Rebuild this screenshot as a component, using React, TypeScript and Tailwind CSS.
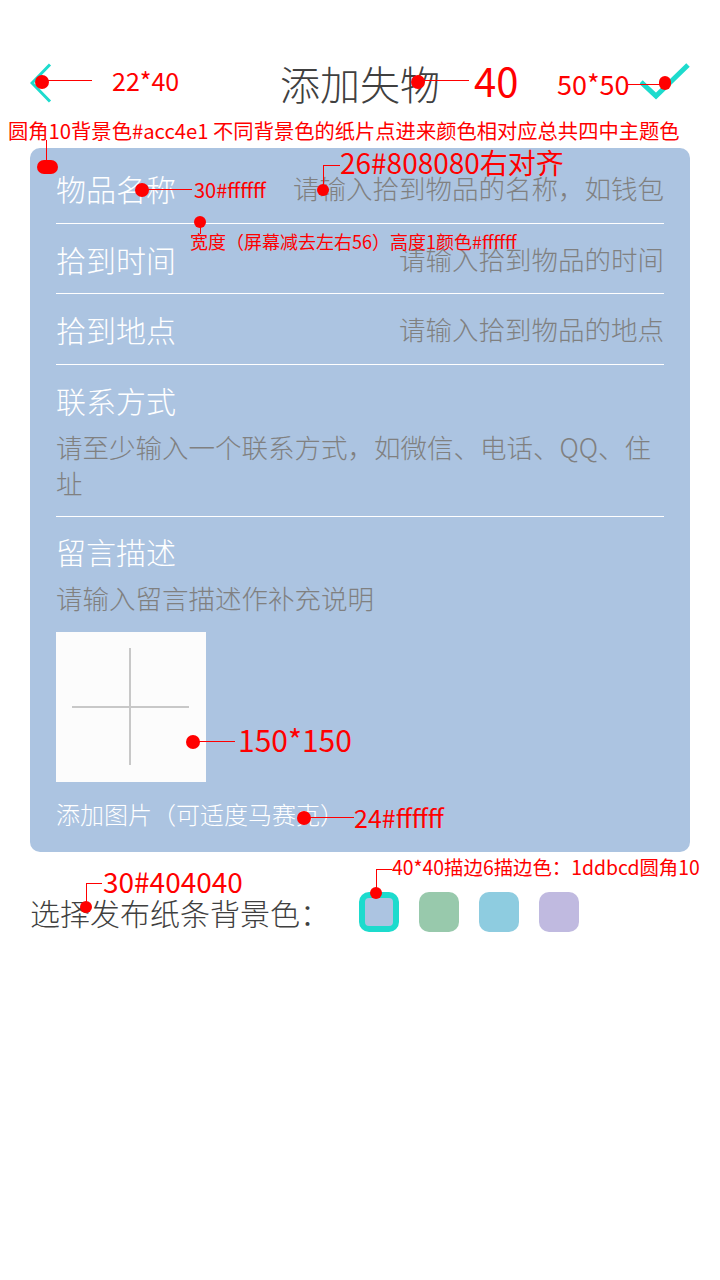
import React from "react";

const F = "font-['Noto_Sans_CJK_SC','Noto_Sans',sans-serif]";

function Swatch({ cls }: { cls: string }) {
  return <div className={`w-[40px] h-[40px] rounded-[10px] ${cls}`} />;
}

export default function App() {
  return (
    <div className={`relative w-[720px] min-h-[1280px] bg-white pt-[53px] font-light ${F}`}>
      {/* header */}
      <div className="h-[60px] px-[30px] grid grid-cols-[1fr_auto_1fr] items-center">
        <div className="flex items-center">
          <svg width="22" height="40" viewBox="0 0 22 40">
            <polyline points="20,1.5 2,20 20,38.5" fill="none" stroke="#1ddbcd" strokeWidth="3" />
          </svg>
        </div>
        <div className="text-[40px] leading-[60px] text-[#404040]">添加失物</div>
        <div className="flex justify-end items-center">
          <svg width="50" height="50" viewBox="0 0 50 50">
            <polyline points="1,24 16,38 48,7" fill="none" stroke="#1ddbcd" strokeWidth="5" />
          </svg>
        </div>
      </div>

      {/* card */}
      <div className="mt-[35px] mx-[30px] rounded-[10px] bg-[#acc4e1] px-[26px] pb-[22px]">
        <div className="h-[75px] pt-[4px] flex items-center justify-between">
          <span className="text-[30px] leading-[36px] text-white">物品名称</span>
          <span className="text-[26.5px] leading-[36px] text-[#808080]">请输入拾到物品的名称，如钱包</span>
        </div>
        <div className="h-px bg-white" />
        <div className="h-[69px] flex items-center justify-between">
          <span className="text-[30px] leading-[36px] text-white">拾到时间</span>
          <span className="text-[26.5px] leading-[36px] text-[#808080]">请输入拾到物品的时间</span>
        </div>
        <div className="h-px bg-white" />
        <div className="h-[70px] flex items-center justify-between">
          <span className="text-[30px] leading-[36px] text-white">拾到地点</span>
          <span className="text-[26.5px] leading-[36px] text-[#808080]">请输入拾到物品的地点</span>
        </div>
        <div className="h-px bg-white" />
        <div className="pt-[17px] pb-[15px]">
          <div className="text-[30px] leading-[36px] text-white">联系方式</div>
          <div className="mt-[11px] text-[26.5px] leading-[36px] text-[#808080]">
            请至少输入一个联系方式，如微信、电话、QQ、住址
          </div>
        </div>
        <div className="h-px bg-white" />
        <div className="pt-[16px]">
          <div className="text-[30px] leading-[36px] text-white">留言描述</div>
          <div className="mt-[11px] text-[26.5px] leading-[36px] text-[#808080]">请输入留言描述作补充说明</div>
          <div className="mt-[16px] w-[150px] h-[150px] bg-[#fcfcfc] flex items-center justify-center">
            <svg width="118" height="118" viewBox="0 0 118 118">
              <line x1="0" y1="59" x2="117" y2="59" stroke="#c8c8c8" strokeWidth="2" />
              <line x1="58" y1="0" x2="58" y2="117" stroke="#c8c8c8" strokeWidth="2" />
            </svg>
          </div>
          <div className="mt-[16px] text-[24px] leading-[32px] text-white">添加图片（可适度马赛克）</div>
        </div>
      </div>

      {/* color select */}
      <div className="mt-[40px] px-[30px] flex items-center">
        <span className="text-[30px] leading-[40px] text-[#404040]">选择发布纸条背景色：</span>
        <div className="ml-[29px] flex gap-[20px]">
          <div className="w-[40px] h-[40px] rounded-[10px] border-[6px] border-[#1ddbcd] bg-[#acc4e1]" />
          <Swatch cls="bg-[#98c9ac]" />
          <Swatch cls="bg-[#8ecce0]" />
          <Swatch cls="bg-[#c0bae0]" />
        </div>
      </div>

      {/* annotations overlay */}
      <div className="absolute inset-0 pointer-events-none text-[#ff0000] font-normal">
        {/* back */}
        <div className="absolute left-[42px] top-[80px] w-[50px] h-px bg-[#ff0000]" />
        <div className="absolute left-[35px] top-[75px] w-[14px] h-[14px] rounded-full bg-[#ff0000]" />
        <div className="absolute left-[112px] top-[66px] text-[25px] leading-[28px] whitespace-nowrap">22*40</div>
        {/* title */}
        <div className="absolute left-[418px] top-[80px] w-[51px] h-px bg-[#ff0000]" />
        <div className="absolute left-[411px] top-[75px] w-[14px] h-[14px] rounded-full bg-[#ff0000]" />
        <div className="absolute left-[474px] top-[56px] text-[40px] leading-[48px] whitespace-nowrap">40</div>
        {/* check */}
        <div className="absolute left-[628px] top-[84px] w-[37px] h-px bg-[#ff0000]" />
        <div className="absolute left-[659px] top-[76px] w-[12px] h-[14px] rounded-full bg-[#ff0000]" />
        <div className="absolute left-[557px] top-[68px] text-[27px] leading-[32px] whitespace-nowrap">50*50</div>
        {/* card caption */}
        <div className="absolute left-[8px] top-[116px] text-[20.3px] leading-[28px] whitespace-nowrap">
          圆角10背景色#acc4e1 不同背景色的纸片点进来颜色相对应总共四中主题色
        </div>
        <div className="absolute left-[46px] top-[140px] w-px h-[26px] bg-[#ff0000]" />
        <div className="absolute left-[37px] top-[160px] w-[21px] h-[14px] rounded-full bg-[#ff0000]" />
        {/* label */}
        <div className="absolute left-[142px] top-[189px] w-[50px] h-px bg-[#ff0000]" />
        <div className="absolute left-[135px] top-[183px] w-[14px] h-[14px] rounded-full bg-[#ff0000]" />
        <div className="absolute left-[194px] top-[176px] text-[20px] leading-[28px] whitespace-nowrap">30#ffffff</div>
        {/* placeholder */}
        <div className="absolute left-[323px] top-[165px] w-px h-[25px] bg-[#ff0000]" />
        <div className="absolute left-[323px] top-[165px] w-[17px] h-px bg-[#ff0000]" />
        <div className="absolute left-[317px] top-[184px] w-[12px] h-[12px] rounded-full bg-[#ff0000]" />
        <div className="absolute left-[340px] top-[145px] text-[28px] leading-[34px] whitespace-nowrap">26#808080右对齐</div>
        {/* divider */}
        <div className="absolute left-[200px] top-[222px] w-px h-[12px] bg-[#ff0000]" />
        <div className="absolute left-[194px] top-[216px] w-[12px] h-[12px] rounded-full bg-[#ff0000]" />
        <div className="absolute left-[190px] top-[230px] text-[18px] leading-[22px] whitespace-nowrap">
          宽度（屏幕减去左右56）高度1颜色#ffffff
        </div>
        {/* image */}
        <div className="absolute left-[193px] top-[741px] w-[42px] h-px bg-[#ff0000]" />
        <div className="absolute left-[186px] top-[735px] w-[14px] h-[14px] rounded-full bg-[#ff0000]" />
        <div className="absolute left-[238px] top-[721px] text-[30px] leading-[36px] whitespace-nowrap">150*150</div>
        {/* image caption */}
        <div className="absolute left-[304px] top-[817px] w-[50px] h-px bg-[#ff0000]" />
        <div className="absolute left-[297px] top-[811px] w-[14px] h-[14px] rounded-full bg-[#ff0000]" />
        <div className="absolute left-[354px] top-[801px] text-[25px] leading-[32px] whitespace-nowrap">24#ffffff</div>
        {/* bottom label */}
        <div className="absolute left-[86px] top-[883px] w-px h-[24px] bg-[#ff0000]" />
        <div className="absolute left-[86px] top-[883px] w-[16px] h-px bg-[#ff0000]" />
        <div className="absolute left-[80px] top-[901px] w-[12px] h-[12px] rounded-full bg-[#ff0000]" />
        <div className="absolute left-[103px] top-[864px] text-[28px] leading-[34px] whitespace-nowrap">30#404040</div>
        {/* swatch */}
        <div className="absolute left-[376px] top-[869px] w-px h-[24px] bg-[#ff0000]" />
        <div className="absolute left-[376px] top-[869px] w-[16px] h-px bg-[#ff0000]" />
        <div className="absolute left-[370px] top-[887px] w-[12px] h-[12px] rounded-full bg-[#ff0000]" />
        <div className="absolute left-[392px] top-[854px] text-[19.4px] leading-[26px] whitespace-nowrap">
          40*40描边6描边色：1ddbcd圆角10
        </div>
      </div>
    </div>
  );
}
